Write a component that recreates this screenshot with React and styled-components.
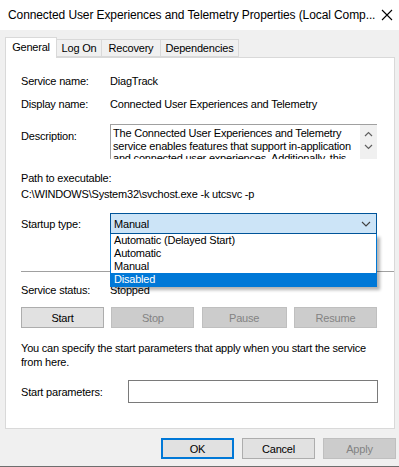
import React from "react";
import styled, { createGlobalStyle } from "styled-components";

const Global = createGlobalStyle`
  body {
    margin: 0;
    background: #f0f0f0;
    font-family: "Liberation Sans", Arial, sans-serif;
    font-size: 11px;
    letter-spacing: -0.2px;
    color: #000;
  }
`;

const startupTypes = ["Automatic (Delayed Start)", "Automatic", "Manual", "Disabled"];

const tabs = [
  { name: "General", width: 52 },
  { name: "Log On", width: 45 },
  { name: "Recovery", width: 59 },
  { name: "Dependencies", width: 78 },
];

function App() {
  return (
    <Window>
      <Global />
      <TitleBar>
        <Title>Connected User Experiences and Telemetry Properties (Local Comp...</Title>
        <Close>
          <svg width="12" height="12" viewBox="0 0 12 12">
            <path d="M1 1L11 11M11 1L1 11" stroke="#000" strokeWidth="1.1" fill="none" />
          </svg>
        </Close>
      </TitleBar>
      <Body>
        <Tabs>
          {tabs.map((t, i) => (
            <Tab key={t.name} active={i === 0} width={t.width}>
              {t.name}
            </Tab>
          ))}
        </Tabs>
        <Panel>
          <Row top={16}>
            <Label>Service name:</Label>
            <Value>DiagTrack</Value>
          </Row>
          <Row top={9}>
            <Label>Display name:</Label>
            <Value>Connected User Experiences and Telemetry</Value>
          </Row>
          <Row top={13} align="flex-start">
            <Label pad={5}>Description:</Label>
            <DescBox>
              <DescText>
                The Connected User Experiences and Telemetry service enables features that support in-application
                and connected user experiences. Additionally, this service manages the event driven collection
              </DescText>
              <Scroll>
                <svg width="9" height="6" viewBox="0 0 9 6">
                  <path d="M1 5L4.5 1.5L8 5" stroke="#606060" strokeWidth="1.2" fill="none" />
                </svg>
                <svg width="9" height="6" viewBox="0 0 9 6">
                  <path d="M1 1L4.5 4.5L8 1" stroke="#606060" strokeWidth="1.2" fill="none" />
                </svg>
              </Scroll>
            </DescBox>
          </Row>
          <Block top={12}>
            <Line>Path to executable:</Line>
            <Line top={2}>C:\WINDOWS\System32\svchost.exe -k utcsvc -p</Line>
          </Block>
          <Row top={12}>
            <Label>Startup type:</Label>
            <SelectWrap>
              <Select>
                <span>Manual</span>
                <svg width="10" height="6" viewBox="0 0 10 6">
                  <path d="M1 1L5 5L9 1" stroke="#404040" strokeWidth="1.1" fill="none" />
                </svg>
              </Select>
              <DropList>
                {startupTypes.map((t) => (
                  <Option key={t} selected={t === "Disabled"}>
                    {t}
                  </Option>
                ))}
              </DropList>
            </SelectWrap>
          </Row>
          <Separator />
          <Row top={11}>
            <Label>Service status:</Label>
            <Value>Stopped</Value>
          </Row>
          <ButtonRow>
            <Button>Start</Button>
            <Button disabled>Stop</Button>
            <Button disabled wide>
              Pause
            </Button>
            <Button disabled>Resume</Button>
          </ButtonRow>
          <Note>You can specify the start parameters that apply when you start the service from here.</Note>
          <Row top={11}>
            <Label width={107}>Start parameters:</Label>
            <Input />
          </Row>
        </Panel>
        <Footer>
          <FootButton primary>OK</FootButton>
          <FootButton>Cancel</FootButton>
          <FootButton disabled>Apply</FootButton>
        </Footer>
      </Body>
    </Window>
  );
}

const Window = styled.div`
  width: 399px;
  height: 467px;
  box-sizing: border-box;
  border-bottom: 1px solid #6e6e6e;
  display: flex;
  flex-direction: column;
  overflow: hidden;
`;

const TitleBar = styled.div`
  height: 30px;
  background: #fff;
  display: flex;
  align-items: center;
  justify-content: space-between;
  padding: 0 6px 0 8px;
  flex-shrink: 0;
`;

const Title = styled.div`
  font-size: 12px;
  letter-spacing: -0.1px;
  white-space: nowrap;
  margin-top: -1px;
`;

const Close = styled.div`
  display: flex;
  align-items: center;
`;

const Body = styled.div`
  flex: 1;
  display: flex;
  flex-direction: column;
  padding: 7px 5px 0 5px;
`;

const Tabs = styled.div`
  display: flex;
  align-items: flex-end;
  height: 20px;
  position: relative;
  z-index: 1;
`;

const Tab = styled.div`
  box-sizing: border-box;
  width: ${(p) => p.width}px;
  height: ${(p) => (p.active ? "21px" : "18px")};
  margin-bottom: ${(p) => (p.active ? "-1px" : "0")};
  padding-top: ${(p) => (p.active ? "2px" : "1px")};
  border: 1px solid #d9d9d9;
  border-bottom: ${(p) => (p.active ? "none" : "1px solid #d9d9d9")};
  border-left-width: ${(p) => (p.active ? "1px" : "0")};
  background: ${(p) => (p.active ? "#fff" : "#f0f0f0")};
  line-height: 14px;
  text-align: center;
  white-space: nowrap;
`;

const Panel = styled.div`
  box-sizing: border-box;
  width: 390px;
  height: 372px;
  background: #fff;
  border: 1px solid #d9d9d9;
  padding: 0 17px 0 15px;
  display: flex;
  flex-direction: column;
`;

const Row = styled.div`
  display: flex;
  align-items: ${(p) => p.align || "center"};
  margin-top: ${(p) => p.top || 0}px;
`;

const Label = styled.div`
  width: ${(p) => p.width || 89}px;
  flex-shrink: 0;
  line-height: 14px;
  padding-top: ${(p) => p.pad || 0}px;
`;

const Value = styled.div`
  line-height: 14px;
  white-space: nowrap;
`;

const DescBox = styled.div`
  flex: 1;
  height: 35px;
  box-sizing: border-box;
  border-top: 1px solid #a0a0a0;
  border-left: 1px solid #a0a0a0;
  display: flex;
  overflow: hidden;
`;

const DescText = styled.div`
  flex: 1;
  padding: 2px 0 0 2px;
  line-height: 12.5px;
`;

const Scroll = styled.div`
  width: 17px;
  background: #f0f0f0;
  display: flex;
  flex-direction: column;
  align-items: center;
  gap: 7px;
  padding-top: 6px;
  box-sizing: border-box;
`;

const Block = styled.div`
  margin-top: ${(p) => p.top || 0}px;
`;

const Line = styled.div`
  line-height: 14px;
  margin-top: ${(p) => p.top || 0}px;
  white-space: nowrap;
`;

const SelectWrap = styled.div`
  position: relative;
  flex: 1;
`;

const Select = styled.div`
  box-sizing: border-box;
  height: 21px;
  background: #cce4f7;
  border: 1px solid #005499;
  display: flex;
  align-items: center;
  justify-content: space-between;
  padding: 0 5px 0 3px;
`;

const DropList = styled.div`
  position: absolute;
  left: 0;
  right: 0;
  top: 21px;
  background: #fff;
  border: 1px solid #0078d7;
  border-top: none;
  box-shadow: 3px 3px 3px rgba(0, 0, 0, 0.3);
  z-index: 2;
`;

const Option = styled.div`
  height: 13px;
  line-height: 13px;
  padding-left: 3px;
  background: ${(p) => (p.selected ? "#0078d7" : "#fff")};
  color: ${(p) => (p.selected ? "#fff" : "#000")};
`;

const Separator = styled.div`
  height: 1px;
  background: #a0a0a0;
  margin-top: 37px;
  margin-right: -17px;
`;

const ButtonRow = styled.div`
  display: flex;
  justify-content: space-between;
  margin-top: 10px;
`;

const Button = styled.button`
  box-sizing: border-box;
  width: ${(p) => (p.wide ? 85 : 83)}px;
  height: 21px;
  padding: 0;
  font-family: inherit;
  font-size: 11px;
  letter-spacing: inherit;
  background: ${(p) => (p.disabled ? "#cccccc" : "#e1e1e1")};
  border: 1px solid ${(p) => (p.disabled ? "#bfbfbf" : "#adadad")};
  color: ${(p) => (p.disabled ? "#838383" : "#000")};
`;

const Note = styled.div`
  margin-top: 13px;
  line-height: 14px;
`;

const Input = styled.div`
  flex: 1;
  height: 23px;
  box-sizing: border-box;
  border: 1px solid #7a7a7a;
  margin-right: -1px;
`;

const Footer = styled.div`
  display: flex;
  justify-content: flex-end;
  gap: 8px;
  padding: 9px 0 0 0;
  margin-right: -2px;
`;

const FootButton = styled.button`
  box-sizing: border-box;
  width: 73px;
  height: 21px;
  padding: 0;
  font-family: inherit;
  font-size: 11px;
  letter-spacing: inherit;
  background: ${(p) => (p.disabled ? "#cccccc" : "#e1e1e1")};
  border: ${(p) => (p.primary ? "2px solid #0078d7" : `1px solid ${p.disabled ? "#bfbfbf" : "#adadad"}`)};
  color: ${(p) => (p.disabled ? "#838383" : "#000")};
`;

export default App;
